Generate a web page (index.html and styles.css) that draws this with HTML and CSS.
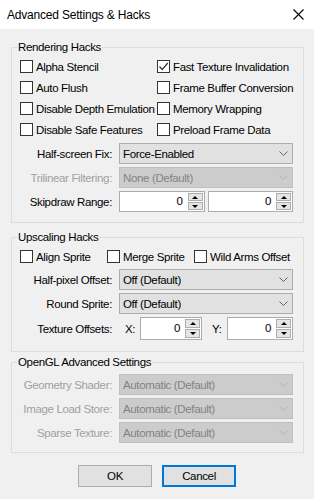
FILE: index.html
```html
<!DOCTYPE html>
<html>
<head>
<meta charset="utf-8">
<link rel="stylesheet" href="styles.css">
</head>
<body>
<div class="window">
  <div class="titlebar">
    <span class="title">Advanced Settings &amp; Hacks</span>
    <svg class="close" width="11" height="11" viewBox="0 0 11 11"><path d="M0.5 0.5 L10.5 10.5 M10.5 0.5 L0.5 10.5" stroke="#000" stroke-width="1.1" fill="none"/></svg>
  </div>
  <div class="content">
    <fieldset class="group g1">
      <legend>Rendering Hacks</legend>
      <div class="checks two">
        <label class="cb"><span class="box"></span>Alpha Stencil</label>
        <label class="cb"><span class="box checked"><svg width="11" height="11" viewBox="0 0 11 11"><path d="M1.5 5.5 L4.2 8.5 L9.8 2" stroke="#333" stroke-width="1.2" fill="none"/></svg></span>Fast Texture Invalidation</label>
        <label class="cb"><span class="box"></span>Auto Flush</label>
        <label class="cb"><span class="box"></span>Frame Buffer Conversion</label>
        <label class="cb"><span class="box"></span>Disable Depth Emulation</label>
        <label class="cb"><span class="box"></span>Memory Wrapping</label>
        <label class="cb"><span class="box"></span>Disable Safe Features</label>
        <label class="cb"><span class="box"></span>Preload Frame Data</label>
      </div>
      <div class="form f1">
        <span class="lbl">Half-screen Fix:</span>
        <div class="combo"><span>Force-Enabled</span><svg class="chev" width="9" height="5" viewBox="0 0 9 5"><path d="M0.5 0.5 L4.5 4.5 L8.5 0.5" stroke="#606060" fill="none"/></svg></div>
        <span class="lbl dis">Trilinear Filtering:</span>
        <div class="combo disabled"><span>None (Default)</span><svg class="chev" width="9" height="5" viewBox="0 0 9 5"><path d="M0.5 0.5 L4.5 4.5 L8.5 0.5" stroke="#b0b0b0" fill="none"/></svg></div>
        <span class="lbl">Skipdraw Range:</span>
        <div class="spins">
          <div class="spin"><span class="val">0</span><div class="btns"><span class="up"></span><span class="down"></span></div></div>
          <div class="spin"><span class="val">0</span><div class="btns"><span class="up"></span><span class="down"></span></div></div>
        </div>
      </div>
    </fieldset>

    <fieldset class="group g2">
      <legend>Upscaling Hacks</legend>
      <div class="checks three">
        <label class="cb"><span class="box"></span>Align Sprite</label>
        <label class="cb"><span class="box"></span>Merge Sprite</label>
        <label class="cb"><span class="box"></span>Wild Arms Offset</label>
      </div>
      <div class="form f2">
        <span class="lbl">Half-pixel Offset:</span>
        <div class="combo"><span>Off (Default)</span><svg class="chev" width="9" height="5" viewBox="0 0 9 5"><path d="M0.5 0.5 L4.5 4.5 L8.5 0.5" stroke="#606060" fill="none"/></svg></div>
        <span class="lbl">Round Sprite:</span>
        <div class="combo"><span>Off (Default)</span><svg class="chev" width="9" height="5" viewBox="0 0 9 5"><path d="M0.5 0.5 L4.5 4.5 L8.5 0.5" stroke="#606060" fill="none"/></svg></div>
        <span class="lbl">Texture Offsets:</span>
        <div class="offsets">
          <span class="axis ax">X:</span>
          <div class="spin tall sx"><span class="val">0</span><div class="btns"><span class="up"></span><span class="down"></span></div></div>
          <span class="axis ay">Y:</span>
          <div class="spin tall sy"><span class="val">0</span><div class="btns"><span class="up"></span><span class="down"></span></div></div>
        </div>
      </div>
    </fieldset>

    <fieldset class="group g3">
      <legend>OpenGL Advanced Settings</legend>
      <div class="form f3">
        <span class="lbl dis">Geometry Shader:</span>
        <div class="combo disabled"><span>Automatic (Default)</span><svg class="chev" width="9" height="5" viewBox="0 0 9 5"><path d="M0.5 0.5 L4.5 4.5 L8.5 0.5" stroke="#b0b0b0" fill="none"/></svg></div>
        <span class="lbl dis">Image Load Store:</span>
        <div class="combo disabled"><span>Automatic (Default)</span><svg class="chev" width="9" height="5" viewBox="0 0 9 5"><path d="M0.5 0.5 L4.5 4.5 L8.5 0.5" stroke="#b0b0b0" fill="none"/></svg></div>
        <span class="lbl dis">Sparse Texture:</span>
        <div class="combo disabled"><span>Automatic (Default)</span><svg class="chev" width="9" height="5" viewBox="0 0 9 5"><path d="M0.5 0.5 L4.5 4.5 L8.5 0.5" stroke="#b0b0b0" fill="none"/></svg></div>
      </div>
    </fieldset>

    <div class="buttons">
      <button class="btn">OK</button>
      <button class="btn default">Cancel</button>
    </div>
  </div>
</div>
</body>
</html>
```

FILE: styles.css
```css
* { box-sizing: border-box; }
html, body { margin: 0; padding: 0; }
body {
  width: 314px;
  height: 499px;
  background: #f0f0f0;
  font-family: "Liberation Sans", Arial, sans-serif;
  font-size: 11.5px;
  letter-spacing: -0.35px;
  color: #000;
  overflow: hidden;
}
.window { width: 314px; height: 499px; }
.titlebar {
  height: 29px;
  background: #fff;
  display: flex;
  align-items: center;
  justify-content: space-between;
  padding: 0 10px 0 7px;
}
.title { font-size: 12px; letter-spacing: -0.2px; line-height: 14px; padding-top: 1px; }
.close { margin-top: 0; }
.content { padding: 11px 10px 0 11px; }

.group {
  margin: 0;
  padding: 2px 9px 10px 8px;
  border: 1px solid #dcdcdc;
  min-width: 0;
}
.group legend {
  font-size: 11.5px;
  line-height: 14px;
  padding: 0 1px;
  margin-left: -3px;
}
.g2 { margin-top: 7px; padding-bottom: 11px; }
.g3 { margin-top: 3px; padding-top: 5px; padding-bottom: 9px; }

.checks { display: grid; grid-auto-rows: 21px; }
.checks.two { grid-template-columns: 137px 1fr; }
.checks.three { grid-template-columns: 87px 87px 1fr; }
.cb {
  display: flex;
  align-items: center;
  gap: 3px;
  white-space: nowrap;
  line-height: 14px;
}
.box {
  width: 13px;
  height: 13px;
  border: 1px solid #333;
  background: #fff;
  flex: none;
  display: flex;
  align-items: center;
  justify-content: center;
}

.form {
  display: grid;
  grid-template-columns: 92px 174px;
  column-gap: 7px;
  row-gap: 3px;
  align-items: center;
}
.f1 { margin-top: 3px; }
.f2 { margin-top: 2px; }
.lbl { text-align: right; white-space: nowrap; line-height: 14px; }
.lbl.dis { color: #a0a0a0; }

.combo {
  height: 21px;
  border: 1px solid #adadad;
  background: #e1e1e1;
  display: flex;
  align-items: center;
  justify-content: space-between;
  padding: 0 4px 0 3px;
  line-height: 14px;
}
.combo.disabled { background: #cccccc; border-color: #bfbfbf; color: #838383; }

.spins { display: flex; gap: 3px; }
.spin {
  flex: 1;
  height: 21px;
  border: 1px solid #acacac;
  background: #fff;
  display: flex;
  align-items: stretch;
}
.spin .val {
  flex: 1;
  text-align: right;
  padding-right: 5px;
  line-height: 18px;
}
.btns {
  width: 16px;
  display: flex;
  flex-direction: column;
  gap: 1px;
  padding: 1px 1px 1px 0;
}
.btns span {
  flex: 1;
  background: #e5e5e5;
  border: 1px solid #adadad;
  display: flex;
  align-items: center;
  justify-content: center;
}
.btns .up::after {
  content: "";
  border-left: 3px solid transparent;
  border-right: 3px solid transparent;
  border-bottom: 3px solid #000;
}
.btns .down::after {
  content: "";
  border-left: 3px solid transparent;
  border-right: 3px solid transparent;
  border-top: 3px solid #000;
}
.spin.tall { height: 23px; }
.spin.tall .val { line-height: 20px; }

.offsets { display: flex; align-items: center; }
.axis { line-height: 14px; }
.ax { width: 21px; padding-left: 6px; }
.ay { width: 25px; padding-left: 10px; }
.sx { flex: none; width: 62px; }
.sy { flex: none; width: 66px; }

.buttons {
  display: flex;
  justify-content: center;
  gap: 10px;
  margin-top: 12px;
  margin-left: -11px;
  margin-right: -10px;
}
.btn {
  width: 74px;
  height: 22px;
  font-family: inherit;
  font-size: 11.5px;
  letter-spacing: -0.35px;
  background: #e1e1e1;
  border: 1px solid #adadad;
  color: #000;
  padding: 0;
}
.btn.default { border: 2px solid #0078d7; }
```
